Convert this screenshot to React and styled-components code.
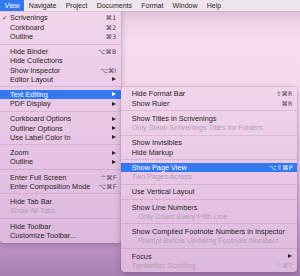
import React from "react";
import styled, { createGlobalStyle } from "styled-components";

const FONT = `"Liberation Sans", "DejaVu Sans", sans-serif`;

const GlobalStyle = createGlobalStyle`
  html, body {
    margin: 0;
    padding: 0;
  }
  body {
    font-family: ${FONT};
  }
`;

const Screen = styled.div`
  width: 300px;
  height: 276px;
  overflow: hidden;
  background: linear-gradient(
    180deg,
    #dcc1d6 11px,
    #efd4e7 22px,
    #f7dcee 45px,
    #f3d5ec 110px,
    #e2bfe0 180px,
    #c69bcb 235px,
    #a97fb2 276px
  );
`;

const MenuBar = styled.div`
  height: 11px;
  display: flex;
  background: #efe4ec;
  box-shadow: 0 0.5px 0 rgba(90, 50, 80, 0.18);
  position: relative;
  z-index: 3;
`;

const BarItem = styled.div`
  padding: 0 4.6px;
  font-size: 7px;
  line-height: 11px;
  color: ${(p) => (p.$active ? "#fff" : "#2b2529")};
  background: ${(p) => (p.$active ? "#3479f4" : "transparent")};
`;

const Menus = styled.div`
  display: flex;
  align-items: flex-start;
`;

const Menu = styled.div`
  width: ${(p) => p.$width}px;
  margin-top: ${(p) => p.$top || 0}px;
  padding: 2.4px 0 ${(p) => (p.$sub ? 2.2 : 3.6)}px;
  box-sizing: border-box;
  border-radius: ${(p) => (p.$sub ? "4px" : "0 0 4px 4px")};
  background: linear-gradient(180deg, #f0d5eb 0%, #eac8e6 45%, #ddb8dd 100%);
  box-shadow: 0 2px 7px rgba(60, 20, 60, 0.28), 0 0 0 0.5px rgba(80, 40, 80, 0.15);
  position: relative;
  z-index: ${(p) => (p.$sub ? 2 : 1)};
`;

const Row = styled.div`
  height: 9.2px;
  display: flex;
  align-items: center;
  padding: 0 ${(p) => p.$right}px 0 ${(p) => p.$left}px;
  font-size: 7.3px;
  white-space: nowrap;
  color: ${(p) => (p.$active ? "#fff" : p.$disabled ? "#b29fb1" : "#251f24")};
  background: ${(p) => (p.$active ? "#3379f2" : "transparent")};
`;

const Check = styled.span`
  width: 8px;
  margin-left: -8px;
  font-family: "DejaVu Sans", sans-serif;
  font-size: 6.5px;
`;

const Shortcut = styled.span`
  margin-left: auto;
  font-family: "DejaVu Sans", sans-serif;
  font-size: 6.2px;
  letter-spacing: 0.3px;
  color: ${(p) => (p.$active ? "#fff" : p.$disabled ? "#b29fb1" : "#4a4049")};
`;

const Arrow = styled.span`
  margin-left: auto;
  margin-right: 1px;
  width: 0;
  height: 0;
  border-left: 4px solid ${(p) => (p.$active ? "#fff" : "#2a2329")};
  border-top: 2.3px solid transparent;
  border-bottom: 2.3px solid transparent;
`;

const Separator = styled.div`
  height: 1px;
  margin: 2.55px 0;
  background: rgba(110, 60, 105, 0.14);
`;

const viewMenu = [
  { label: "Scrivenings", key: "⌘1", checked: true },
  { label: "Corkboard", key: "⌘2" },
  { label: "Outline", key: "⌘3" },
  "-",
  { label: "Hide Binder", key: "⌥⌘B" },
  { label: "Hide Collections" },
  { label: "Show Inspector", key: "⌥⌘I" },
  { label: "Editor Layout", sub: true },
  "-",
  { label: "Text Editing", sub: true, active: true },
  { label: "PDF Display", sub: true },
  "-",
  { label: "Corkboard Options", sub: true },
  { label: "Outliner Options", sub: true },
  { label: "Use Label Color In", sub: true },
  "-",
  { label: "Zoom", sub: true },
  { label: "Outline", sub: true },
  "-",
  { label: "Enter Full Screen", key: "^⌘F" },
  { label: "Enter Composition Mode", key: "⌥⌘F" },
  "-",
  { label: "Hide Tab Bar" },
  { label: "Show All Tabs", disabled: true },
  "-",
  { label: "Hide Toolbar" },
  { label: "Customize Toolbar..." },
];

const textEditingMenu = [
  { label: "Hide Format Bar", key: "⇧⌘R" },
  { label: "Show Ruler", key: "⌘R" },
  "-",
  { label: "Show Titles in Scrivenings" },
  { label: "Only Show Scrivenings Titles for Folders", disabled: true },
  "-",
  { label: "Show Invisibles" },
  { label: "Hide Markup" },
  "-",
  { label: "Show Page View", key: "⌥⇧⌘P", active: true },
  { label: "Two Pages Across", disabled: true },
  "-",
  { label: "Use Vertical Layout" },
  "-",
  { label: "Show Line Numbers" },
  { label: "Only Count Every Fifth Line", disabled: true, indent: true },
  "-",
  { label: "Show Compiled Footnote Numbers in Inspector" },
  { label: "Prompt Before Updating Footnote Numbers", disabled: true, indent: true },
  "-",
  { label: "Focus", sub: true },
  { label: "Typewriter Scrolling", key: "^⌘T", disabled: true },
];

const MenuItems = ({ items, left, right }) =>
  items.map((item, i) =>
    item === "-" ? (
      <Separator key={i} />
    ) : (
      <Row
        key={i}
        $left={item.indent ? left + 6.3 : left}
        $right={right}
        $active={item.active}
        $disabled={item.disabled}
      >
        {item.checked && <Check>✓</Check>}
        {item.label}
        {item.key && (
          <Shortcut $active={item.active} $disabled={item.disabled}>
            {item.key}
          </Shortcut>
        )}
        {item.sub && <Arrow $active={item.active} />}
      </Row>
    )
  );

const bar = ["View", "Navigate", "Project", "Documents", "Format", "Window", "Help"];

export default function App() {
  return (
    <>
      <GlobalStyle />
      <Screen>
        <MenuBar>
          {bar.map((name, i) => (
            <BarItem key={name} $active={i === 0}>
              {name}
            </BarItem>
          ))}
        </MenuBar>
        <Menus>
          <Menu $width={121}>
            <MenuItems items={viewMenu} left={10} right={4.5} />
          </Menu>
          <Menu $width={176} $top={76} $sub>
            <MenuItems items={textEditingMenu} left={10.7} right={4.3} />
          </Menu>
        </Menus>
      </Screen>
    </>
  );
}
